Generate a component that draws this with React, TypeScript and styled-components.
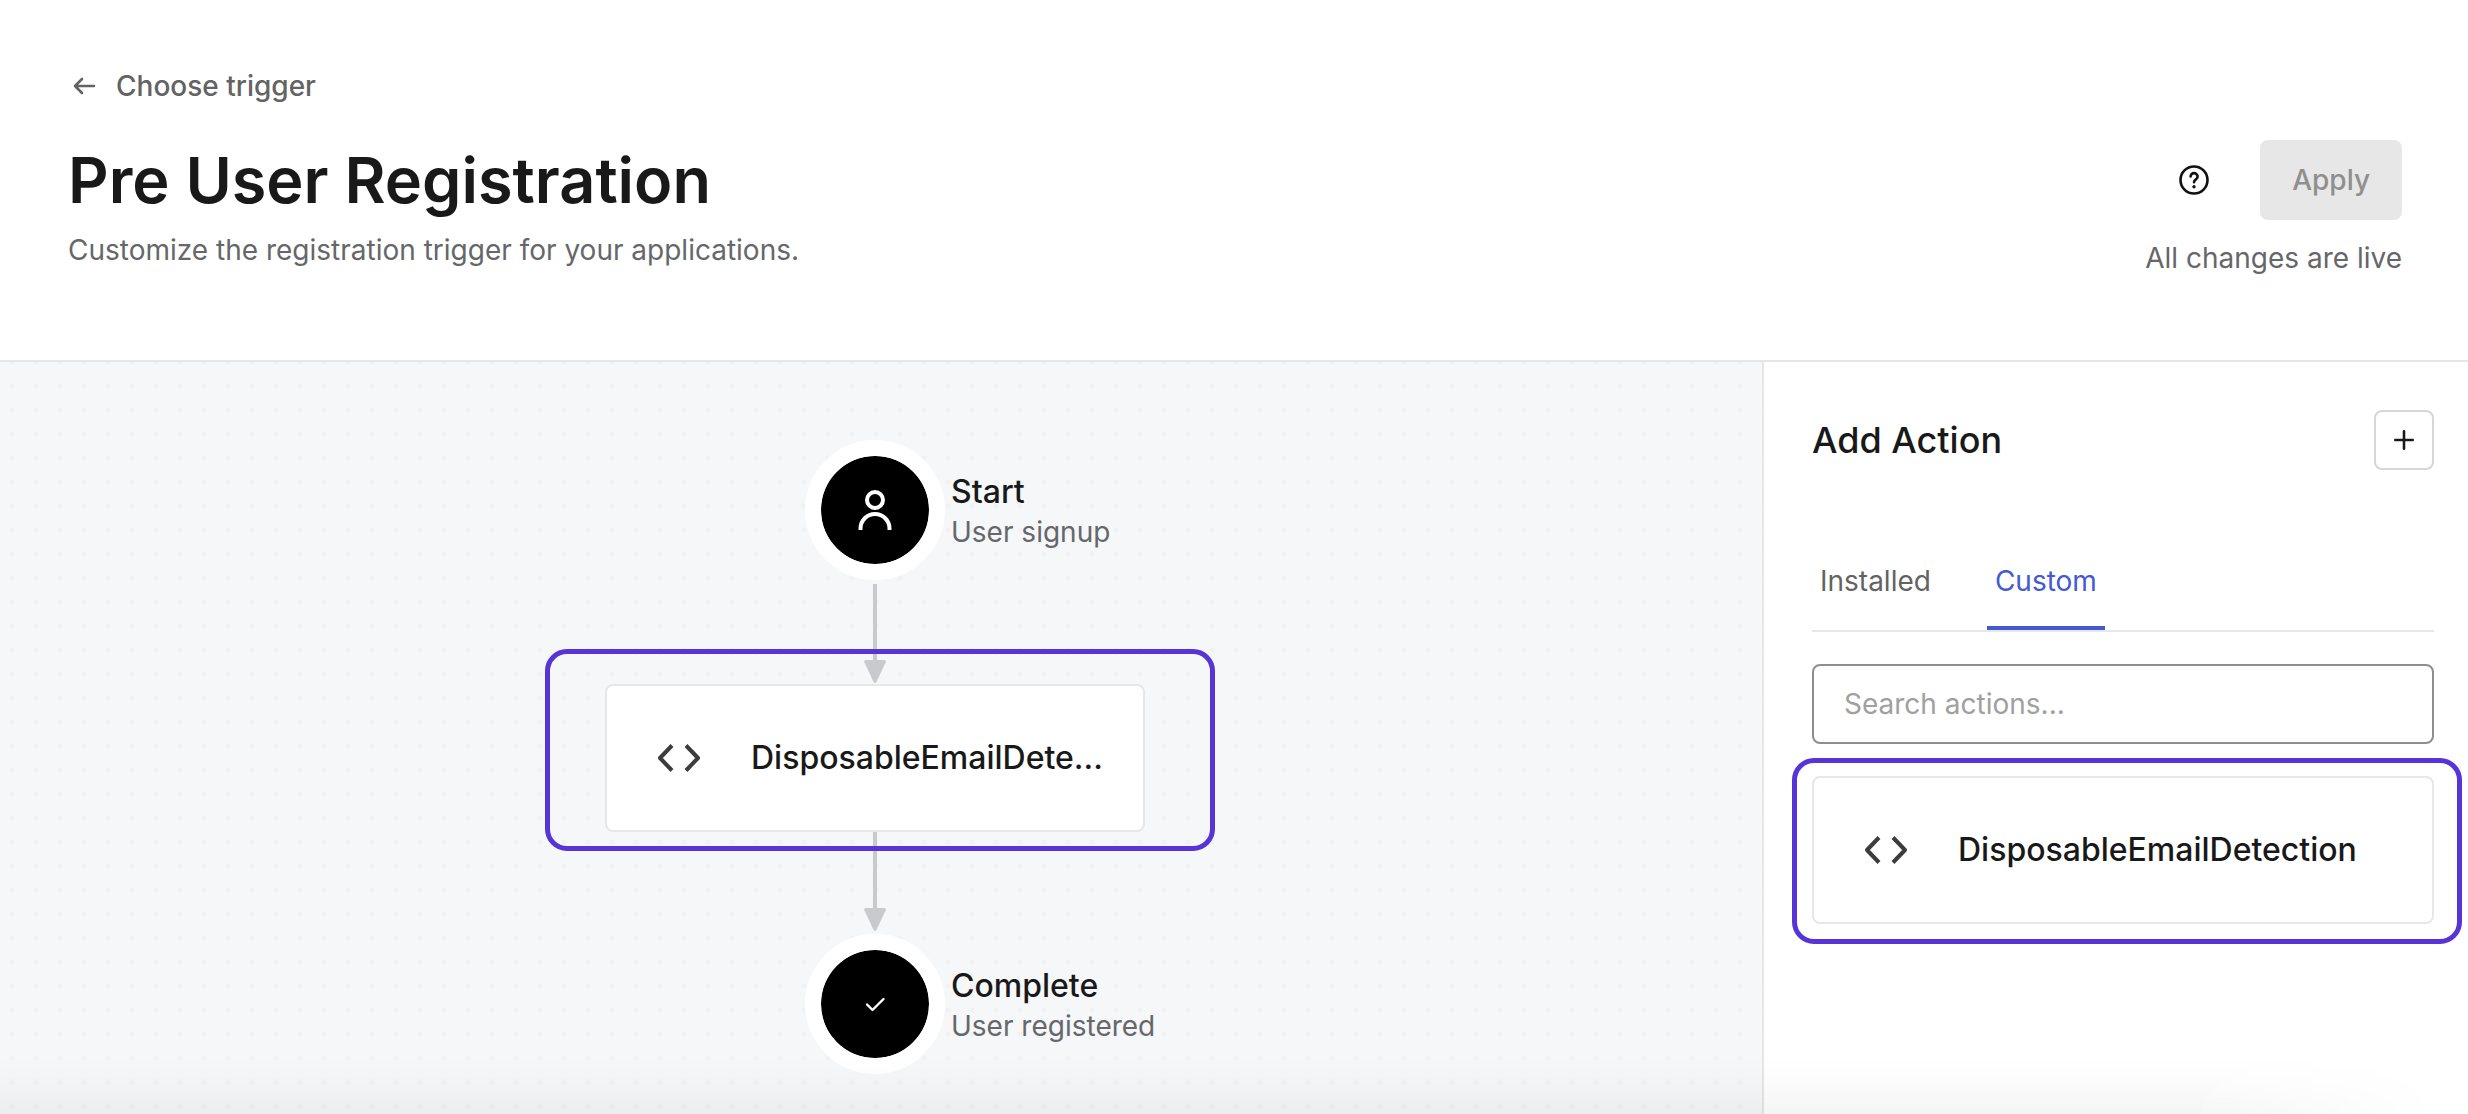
import React from "react";
import styled, { createGlobalStyle, css } from "styled-components";

const GlobalStyle = createGlobalStyle`
  *, *::before, *::after { box-sizing: border-box; }
  body { margin: 0; background: #fff; }
  button, input { font: inherit; }
  h1, h2, p { margin: 0; }
`;

const Page = styled.div`
  position: relative;
  display: flex;
  flex-direction: column;
  min-height: 100vh;
  overflow: hidden;
  color: #191919;
  font-family: Inter, "Liberation Sans", sans-serif;
  font-size: 28px;
  line-height: 40px;
`;

const Header = styled.header`
  display: flex;
  justify-content: space-between;
  padding: 66px 66px 82px 68px;
  border-bottom: 2px solid #e6e6e6;
`;

const Heading = styled.div`
  display: flex;
  flex-direction: column;
  align-items: flex-start;
`;

const BackLink = styled.a`
  display: flex;
  align-items: center;
  gap: 16px;
  color: #636363;
  font-weight: 500;
  text-decoration: none;
`;

const Title = styled.h1`
  margin-top: 34px;
  font-size: 63px;
  font-weight: 600;
  line-height: 80px;
`;

const Muted = styled.p`
  color: #65676a;
`;

const Subtitle = styled(Muted)`
  margin-top: 10px;
`;

const HeaderSide = styled.div`
  display: flex;
  flex-direction: column;
  align-items: flex-end;
  gap: 18px;
  padding-top: 74px;
`;

const Controls = styled.div`
  display: flex;
  align-items: center;
  gap: 32px;
`;

const HelpButton = styled.button`
  display: grid;
  place-items: center;
  width: 68px;
  height: 68px;
  padding: 0;
  border: 0;
  background: none;
  color: #111;
`;

const ApplyButton = styled.button`
  height: 80px;
  padding: 0 32px;
  border: 0;
  border-radius: 8px;
  background: #e7e7e7;
  color: #8f8f8f;
  font-weight: 500;
`;

const Body = styled.div`
  display: flex;
  flex: 1;
`;

const Canvas = styled.main`
  display: flex;
  flex: 1;
  flex-direction: column;
  align-items: center;
  min-width: 0;
  padding: 78px 12px 40px 0;
  background: #f5f7f9 radial-gradient(circle, #f0f1f3 2px, transparent 3px) 0 -12px / 24px 24px;
`;

const Step = styled.div`
  display: grid;
  grid-template-columns: minmax(0, 1fr) 140px minmax(0, 1fr);
  align-items: center;
  gap: 6px;
  width: 540px;
`;

const StepDot = styled.div`
  display: grid;
  grid-column: 2;
  place-items: center;
  height: 140px;
  border: 16px solid #fff;
  border-radius: 50%;
  background: #000 padding-box;
  color: #fff;
`;

const StepText = styled.div`
  padding-top: 4px;
  white-space: nowrap;
`;

const StepName = styled.h2`
  font-size: 32px;
  font-weight: 500;
  line-height: 40px;
`;

const ConnectorSvg = styled.svg<{ $spaced?: boolean }>`
  display: block;
  margin-top: ${(p) => (p.$spaced ? 4 : 0)}px;
`;

const Highlighted = styled.div<{ $area: "canvas" | "panel" }>`
  position: relative;
  &::after {
    content: "";
    position: absolute;
    inset: ${(p) => (p.$area === "canvas" ? "-35px -70px -19px -60px" : "-18px -28px -20px -20px")};
    border: 5px solid #5634d8;
    border-radius: 22px;
    pointer-events: none;
  }
  ${(p) => p.$area === "canvas" && css`width: 540px;`}
`;

const ActionButton = styled.button`
  display: flex;
  align-items: center;
  gap: 48px;
  width: 100%;
  height: 148px;
  padding: 0 32px 0 50px;
  border: 2px solid #e7e7e7;
  border-radius: 8px;
  background: #fff;
  color: #191919;
  font-size: 32px;
  font-weight: 500;
  text-align: left;
  white-space: nowrap;
  svg { flex: none; }
`;

const Panel = styled.aside`
  width: 706px;
  padding: 48px 34px 48px 48px;
  border-left: 2px solid #e6e6e6;
`;

const PanelHead = styled.div`
  display: flex;
  align-items: center;
  justify-content: space-between;
`;

const PanelTitle = styled.h2`
  font-size: 36px;
  font-weight: 500;
  line-height: 48px;
`;

const AddButton = styled.button`
  display: grid;
  place-items: center;
  width: 60px;
  height: 60px;
  padding: 0;
  border: 2px solid #d6d6d6;
  border-radius: 8px;
  background: #fff;
  color: #191919;
`;

const Tabs = styled.div`
  display: flex;
  gap: 48px;
  margin-top: 80px;
  border-bottom: 2px solid #e7e7e7;
`;

const Tab = styled.button<{ $active?: boolean }>`
  height: 80px;
  padding: 0 8px 14px;
  border: 0;
  border-bottom: 4px solid ${(p) => (p.$active ? "#4459d2" : "transparent")};
  background: none;
  color: ${(p) => (p.$active ? "#4459d2" : "#636363")};
`;

const Search = styled.input`
  display: block;
  width: 100%;
  height: 80px;
  margin: 32px 0;
  padding: 0 30px;
  border: 2px solid #8e8e8e;
  border-radius: 8px;
  background: #fff;
  color: #191919;
  &::placeholder { color: #a0a0a0; opacity: 1; }
`;

const BottomShade = styled.div`
  position: absolute;
  right: 0;
  bottom: 0;
  left: 0;
  height: 56px;
  background: linear-gradient(to bottom, rgba(0, 0, 0, 0), rgba(0, 0, 0, 0.012) 40%, rgba(0, 0, 0, 0.04));
  mask-image: linear-gradient(to right, #000 calc(100% - 280px), transparent calc(100% - 30px));
  pointer-events: none;
`;

const ACTION_NAME = "DisposableEmailDetection";

const shorten = (name: string, max: number) =>
  name.length > max ? `${name.slice(0, max)}...` : name;

const Connector = ({ spaced }: { spaced?: boolean }) => (
  <ConnectorSvg $spaced={spaced} width="24" height={spaced ? 100 : 102} viewBox={spaced ? "0 0 24 100" : "0 -2 24 102"} aria-hidden="true">
    <path d={spaced ? "M12 0V78" : "M12 -2V76"} stroke="#c9cacd" strokeWidth="4" />
    <path
      d="M2.5 76h19q2 .2 1.2 2.2L13.4 98q-1.4 2-2.8 0L1.3 78.2q-.8-2 1.2-2.2z"
      fill="#c9cacd"
      transform={spaced ? undefined : "translate(0 -2)"}
    />
  </ConnectorSvg>
);

const CodeIcon = () => (
  <svg width="46" height="32" viewBox="0 0 46 32" fill="none" stroke="#3c3c3c" strokeWidth="4" aria-hidden="true">
    <path d="M15 3.500 3 16l12 12.500M29 3.500l12 12.500-12 12.500" strokeLinejoin="round" />
  </svg>
);

export default function App() {
  return (
    <Page>
      <GlobalStyle />
      <Header>
        <Heading>
          <BackLink href="#triggers">
            <svg width="32" height="32" viewBox="0 0 32 32" fill="none" stroke="currentColor" strokeWidth="2.600" strokeLinecap="round" strokeLinejoin="round" aria-hidden="true">
              <path d="M26 16H7M14 9l-7 7 7 7" />
            </svg>
            Choose trigger
          </BackLink>
          <Title>Pre User Registration</Title>
          <Subtitle>Customize the registration trigger for your applications.</Subtitle>
        </Heading>
        <HeaderSide>
          <Controls>
            <HelpButton aria-label="Help">
              <svg width="32" height="32" viewBox="0 0 32 32" fill="none" stroke="currentColor" strokeWidth="2.600" strokeLinecap="round" aria-hidden="true">
                <circle cx="16" cy="16" r="13.500" />
                <path d="M12.600 12.500a3.500 3.500 0 0 1 7 .3c0 2.400-3.600 3-3.600 5.400" />
                <circle cx="16" cy="22.800" r="1.700" fill="currentColor" stroke="none" />
              </svg>
            </HelpButton>
            <ApplyButton disabled>Apply</ApplyButton>
          </Controls>
          <Muted>All changes are live</Muted>
        </HeaderSide>
      </Header>
      <Body>
        <Canvas>
          <Step>
            <StepDot>
              <svg width="44" height="44" viewBox="0 0 44 44" fill="none" stroke="currentColor" strokeWidth="4" aria-hidden="true">
                <circle cx="22" cy="12" r="8" />
                <path d="M7.500 42v-1.500a14.500 14.500 0 0 1 29 0V42" />
              </svg>
            </StepDot>
            <StepText>
              <StepName>Start</StepName>
              <Muted>User signup</Muted>
            </StepText>
          </Step>
          <Connector spaced />
          <Highlighted $area="canvas">
            <ActionButton>
              <CodeIcon />
              {shorten(ACTION_NAME, 19)}
            </ActionButton>
          </Highlighted>
          <Connector />
          <Step>
            <StepDot>
              <svg width="24" height="24" viewBox="0 0 24 24" fill="none" stroke="currentColor" strokeWidth="2.400" strokeLinecap="round" strokeLinejoin="round" aria-hidden="true">
                <path d="M4 12.500 9.500 18 20.500 7" />
              </svg>
            </StepDot>
            <StepText>
              <StepName>Complete</StepName>
              <Muted>User registered</Muted>
            </StepText>
          </Step>
        </Canvas>
        <Panel>
          <PanelHead>
            <PanelTitle>Add Action</PanelTitle>
            <AddButton aria-label="Create action">
              <svg width="24" height="24" viewBox="0 0 24 24" stroke="currentColor" strokeWidth="2.600" strokeLinecap="round" aria-hidden="true">
                <path d="M12 3.300v17.400M3.300 12h17.400" />
              </svg>
            </AddButton>
          </PanelHead>
          <Tabs role="tablist">
            <Tab role="tab" aria-selected={false}>Installed</Tab>
            <Tab role="tab" aria-selected $active>Custom</Tab>
          </Tabs>
          <Search type="search" aria-label="Search actions" placeholder="Search actions..." />
          <Highlighted $area="panel">
            <ActionButton>
              <CodeIcon />
              {ACTION_NAME}
            </ActionButton>
          </Highlighted>
        </Panel>
      </Body>
      <BottomShade />
    </Page>
  );
}
